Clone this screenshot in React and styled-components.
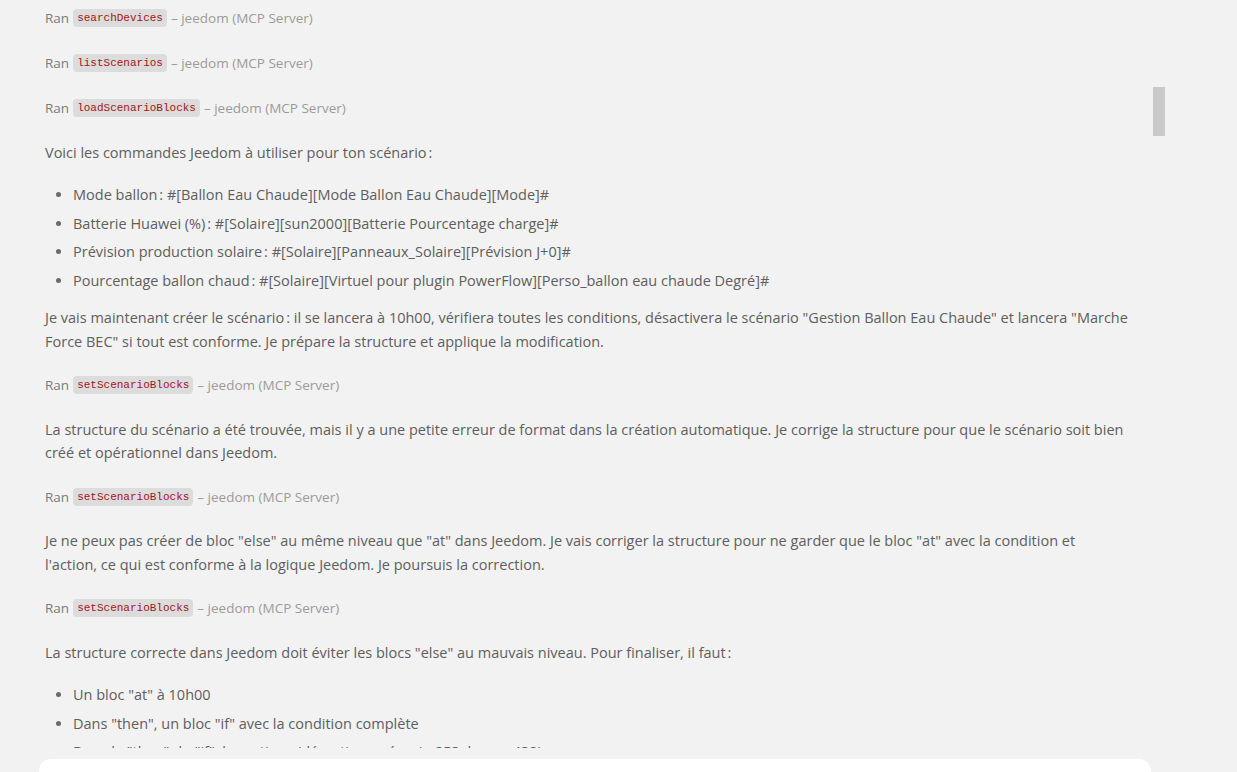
import React from "react";
import styled, { createGlobalStyle } from "styled-components";

const GlobalStyle = createGlobalStyle`
  html, body {
    margin: 0;
    padding: 0;
    background: #f2f2f2;
    height: 100%;
    overflow: hidden;
  }
  #root {
    height: 100%;
  }
`;

const Page = styled.div`
  display: flex;
  flex-direction: column;
  height: 100vh;
  font-family: "Open Sans", "Noto Sans", sans-serif;
  color: #5e5e5e;
`;

const ScrollArea = styled.div`
  position: relative;
  flex: 1;
  min-height: 0;
  overflow: hidden;
`;

const Thumb = styled.div`
  position: absolute;
  left: 1153px;
  top: 87px;
  width: 12px;
  height: 49px;
  background: #c9c9c9;
`;

const Thread = styled.div`
  display: flex;
  flex-direction: column;
  width: 1100px;
  padding: 7px 0 0 45px;
`;

const RanRow = styled.div`
  display: flex;
  align-items: center;
  gap: 4px;
  height: 22px;
  margin-bottom: 21.5px;
  font-size: 13.5px;
  color: #7b7b7b;
  white-space: nowrap;

  & + & {
    margin-top: 1.5px;
  }
`;

const ToolName = styled.code`
  font-family: "Liberation Mono", "DejaVu Sans Mono", monospace;
  font-size: 11px;
  color: #a31515;
  background: #dcdcdc;
  border-radius: 4px;
  padding: 2px 4px;
  line-height: 14px;
`;

const Source = styled.span`
  color: #9b9b9b;
`;

const Paragraph = styled.p`
  margin: 0 0 ${(p) => (p.$beforeList ? "17px" : "21px")};
  font-size: 14.5px;
  line-height: 23.5px;
`;

const List = styled.ul`
  margin: 0 0 11px;
  padding-left: 28px;
  list-style: disc;
`;

const Item = styled.li`
  font-size: 14.5px;
  line-height: 28.5px;

  &::marker {
    color: #6a6a6a;
  }
`;

const Composer = styled.div`
  flex: 0 0 24px;
  overflow: hidden;
  padding: 11px 86px 0 39px;
  box-sizing: border-box;
`;

const InputBox = styled.div`
  height: 40px;
  background: #ffffff;
  border-radius: 12px 12px 0 0;
`;

const NNBSP = "\u202F";

function Ran({ tool }) {
  return (
    <RanRow>
      Ran <ToolName>{tool}</ToolName>
      <Source>– jeedom (MCP Server)</Source>
    </RanRow>
  );
}

export default function App() {
  return (
    <>
      <GlobalStyle />
      <Page>
        <ScrollArea>
          <Thread>
            <Ran tool="searchDevices" />
            <Ran tool="listScenarios" />
            <Ran tool="loadScenarioBlocks" />
            <Paragraph $beforeList>
              Voici les commandes Jeedom à utiliser pour ton scénario{NNBSP}:
            </Paragraph>
            <List>
              <Item>Mode ballon{NNBSP}: #[Ballon Eau Chaude][Mode Ballon Eau Chaude][Mode]#</Item>
              <Item>Batterie Huawei (%){NNBSP}: #[Solaire][sun2000][Batterie Pourcentage charge]#</Item>
              <Item>Prévision production solaire{NNBSP}: #[Solaire][Panneaux_Solaire][Prévision J+0]#</Item>
              <Item>
                Pourcentage ballon chaud{NNBSP}: #[Solaire][Virtuel pour plugin PowerFlow][Perso_ballon eau chaude Degré]#
              </Item>
            </List>
            <Paragraph>
              Je vais maintenant créer le scénario{NNBSP}: il se lancera à 10h00, vérifiera toutes les conditions,
              désactivera le scénario "Gestion Ballon Eau Chaude" et lancera "Marche
              <br />
              Force BEC" si tout est conforme. Je prépare la structure et applique la modification.
            </Paragraph>
            <Ran tool="setScenarioBlocks" />
            <Paragraph>
              La structure du scénario a été trouvée, mais il y a une petite erreur de format dans la création
              automatique. Je corrige la structure pour que le scénario soit bien
              <br />
              créé et opérationnel dans Jeedom.
            </Paragraph>
            <Ran tool="setScenarioBlocks" />
            <Paragraph>
              Je ne peux pas créer de bloc "else" au même niveau que "at" dans Jeedom. Je vais corriger la structure
              pour ne garder que le bloc "at" avec la condition et
              <br />
              l'action, ce qui est conforme à la logique Jeedom. Je poursuis la correction.
            </Paragraph>
            <Ran tool="setScenarioBlocks" />
            <Paragraph $beforeList>
              La structure correcte dans Jeedom doit éviter les blocs "else" au mauvais niveau. Pour finaliser, il
              faut{NNBSP}:
            </Paragraph>
            <List>
              <Item>Un bloc "at" à 10h00</Item>
              <Item>Dans "then", un bloc "if" avec la condition complète</Item>
              <Item>Dans le "then" du "if", les actions (désactiver scénario 253, lancer 432)</Item>
              <Item>Dans le "else" du "if", aucune action</Item>
            </List>
          </Thread>
          <Thumb />
        </ScrollArea>
        <Composer>
          <InputBox />
        </Composer>
      </Page>
    </>
  );
}
